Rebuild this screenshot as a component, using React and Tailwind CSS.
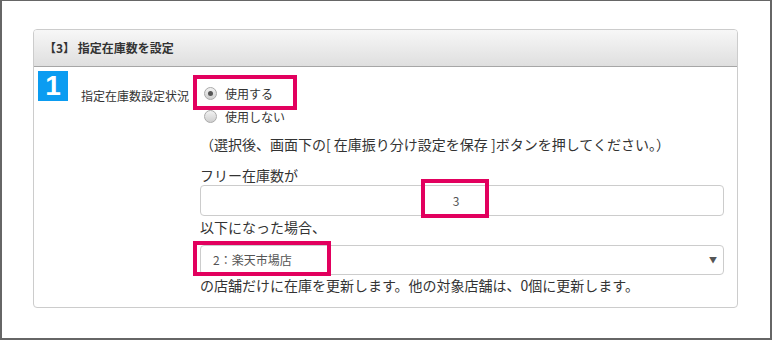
const jp = { fontFamily: '"Noto Sans CJK JP", "Noto Sans", sans-serif' };

function Radio({ checked, label }) {
  return (
    <div className="flex h-[23px] items-center">
      <span className="ml-[4px] flex h-[13px] w-[13px] items-center justify-center rounded-full border border-[#aaaaaa] bg-gradient-to-b from-[#f2f2f2] to-[#cfcfcf]">
        {checked ? <span className="h-[5px] w-[5px] rounded-full bg-[#555]" /> : null}
      </span>
      <span className="ml-[8px] text-[12px] text-[#333]">{label}</span>
    </div>
  );
}

export default function App() {
  return (
    <div
      className="relative h-[340px] w-[772px] overflow-hidden border-x-2 border-b-2 border-t border-[#666] bg-white pl-[31px] pt-[28px]"
      style={jp}
    >
      <div className="w-[705px] rounded-[4px] border border-[#cccccc]">
        <div className="flex h-[37px] items-center rounded-t-[3px] border-b border-[#a6a6a6] bg-gradient-to-b from-[#f7f7f7] to-[#dfdfdf] pl-[10px] text-[12px] font-bold text-[#333]">
          【3】 指定在庫数を設定
        </div>
        <div className="flex pb-[12px] pl-[4px] pr-[13px]">
          <div className="mt-[4px] flex h-[30px] w-[30px] items-center justify-center bg-[#0b9cf1] text-[28px] font-bold leading-none text-white" style={{ fontFamily: '"Liberation Sans", Arial, sans-serif' }}>
            1
          </div>
          <div className="w-[132px] pl-[13px] pt-[21px] text-[12px] leading-[16px] text-[#333]">
            指定在庫数設定状況
          </div>
          <div className="flex-1 pt-[15px] text-[#333]">
            <Radio checked label="使用する" />
            <Radio label="使用しない" />
            <div className="flex h-[32px] items-center text-[14px]">
              （選択後、画面下の[ 在庫振り分け設定を保存 ]ボタンを押してください。）
            </div>
            <div className="h-[25px] pt-[5px] text-[14px] leading-[20px]">フリー在庫数が</div>
            <div className="flex h-[31px] items-center justify-center rounded-[4px] border border-[#cccccc] pr-[12px] text-[12px] text-[#555]">
              3
            </div>
            <div className="h-[22px] text-[14px] leading-[22px]">以下になった場合、</div>
            <div className="mt-[7px] flex h-[30px] items-center justify-between rounded-[4px] border border-[#cccccc] pl-[12px] pr-[6px] text-[12px] text-[#555]">
              <span>2：楽天市場店</span>
              <span className="text-[8px] text-[#555]">▼</span>
            </div>
            <div className="h-[20px] text-[14px] leading-[20px]">
              の店舗だけに在庫を更新します。他の対象店舗は、0個に更新します。
            </div>
          </div>
        </div>
      </div>

      <div className="absolute left-[191px] top-[74px] h-[35px] w-[104px] border-4 border-[#e2005e]" />
      <div className="absolute left-[419px] top-[178px] h-[39px] w-[68px] border-4 border-[#e2005e]" />
      <div className="absolute left-[191px] top-[240px] h-[35px] w-[138px] border-4 border-[#e2005e]" />
    </div>
  );
}
